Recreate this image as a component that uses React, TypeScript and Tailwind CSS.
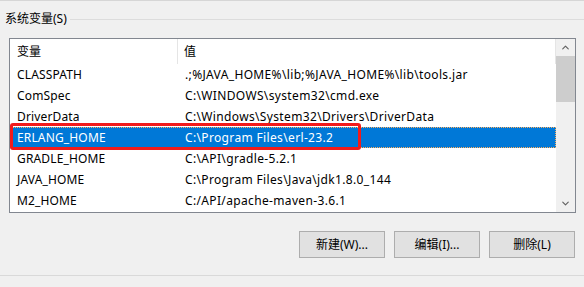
import { ChevronUp, ChevronDown } from 'lucide-react';

const rows = [
  { name: 'CLASSPATH', value: '.;%JAVA_HOME%\\lib;%JAVA_HOME%\\lib\\tools.jar' },
  { name: 'ComSpec', value: 'C:\\WINDOWS\\system32\\cmd.exe' },
  { name: 'DriverData', value: 'C:\\Windows\\System32\\Drivers\\DriverData' },
  { name: 'ERLANG_HOME', value: 'C:\\Program Files\\erl-23.2', selected: true },
  { name: 'GRADLE_HOME', value: 'C:\\API\\gradle-5.2.1' },
  { name: 'JAVA_HOME', value: 'C:\\Program Files\\Java\\jdk1.8.0_144' },
  { name: 'M2_HOME', value: 'C:/API/apache-maven-3.6.1' },
];

const font = { fontFamily: '"Noto Sans", "Noto Sans CJK SC", sans-serif' };

function WinButton({ label }: { label: string }) {
  return (
    <button className="w-[86px] h-[27px] bg-[#e1e1e1] border border-[#adadad] text-[12px] text-black leading-none">
      {label}
    </button>
  );
}

export default function App() {
  return (
    <div
      className="relative w-[584px] h-[287px] bg-[#f0f0f0] overflow-hidden text-[12px] text-black"
      style={font}
    >
      <div className="h-px bg-[#d6d6d6]" />

      {/* group box title */}
      <div className="flex items-center h-[14px] mt-[11px]">
        <span className="pl-[5px] pr-[3px] leading-none">系统变量(S)</span>
        <div className="flex-1 h-px bg-[#dcdcdc]" />
      </div>

      {/* list view */}
      <div className="ml-[9px] mt-[12px] w-[567px] h-[175px] border border-[#828790] bg-white flex">
        <div className="w-[546px] flex flex-col">
          <div className="h-[25px] flex items-center shrink-0">
            <div className="w-[168px] h-full flex items-center pl-[7px] border-r border-[#e5e5e5]">变量</div>
            <div className="flex-1 h-full flex items-center pl-[6px] border-r border-[#e5e5e5]">值</div>
          </div>
          {rows.map((r) => (
            <div
              key={r.name}
              className={`h-[21px] flex items-center shrink-0 ${
                r.selected ? 'bg-[#0078d7] text-white border border-dotted border-[#ffb060]' : 'border border-transparent'
              }`}
            >
              <div className="w-[168px] pl-[6px] whitespace-nowrap tracking-[0.15px]">{r.name}</div>
              <div className="flex-1 pl-[6px] whitespace-nowrap tracking-[0.35px]">{r.value}</div>
            </div>
          ))}
        </div>

        {/* scrollbar */}
        <div className="flex-1 bg-[#f0f0f0] flex flex-col items-center">
          <div className="h-[17px] w-full flex items-center justify-center text-[#606060]">
            <ChevronUp size={11} strokeWidth={2.5} />
          </div>
          <div className="w-full h-[46px] bg-[#cdcdcd]" />
          <div className="flex-1" />
          <div className="h-[17px] w-full flex items-center justify-center text-[#606060]">
            <ChevronDown size={11} strokeWidth={2.5} />
          </div>
        </div>
      </div>

      {/* buttons */}
      <div className="flex justify-end gap-[9px] pr-[9px] mt-[18px]">
        <WinButton label="新建(W)..." />
        <WinButton label="编辑(I)..." />
        <WinButton label="删除(L)" />
      </div>

      <div className="mt-[17px] h-px bg-[#d9d9d9]" />

      {/* annotation */}
      <div className="absolute left-[10px] top-[123px] w-[351px] h-[27px] border-[3px] border-[#f21b1b] rounded-[3px]" />
    </div>
  );
}
